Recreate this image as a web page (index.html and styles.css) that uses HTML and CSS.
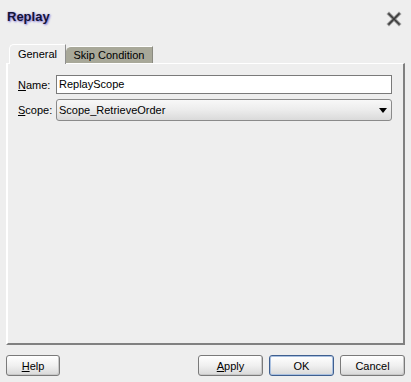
FILE: index.html
```html
<!DOCTYPE html>
<html>
<head>
<meta charset="utf-8">
<link rel="stylesheet" href="styles.css">
</head>
<body>
<div class="dialog">
  <div class="titlebar">
    <span class="title">Replay</span>
    <svg class="close" width="16" height="16" viewBox="0 0 16 16">
      <path d="M3 3 L13 13 M13 3 L3 13" stroke="#9a9a9a" stroke-width="3.6" stroke-linecap="square"/>
      <path d="M3 3 L13 13 M13 3 L3 13" stroke="#3a3a3a" stroke-width="1.6" stroke-linecap="square"/>
    </svg>
  </div>
  <div class="tabs">
    <div class="tab active">General</div>
    <div class="tab inactive">Skip Condition</div>
  </div>
  <div class="panel">
    <div class="row">
      <label class="lbl"><u>N</u>ame:</label>
      <div class="input">ReplayScope</div>
    </div>
    <div class="row">
      <label class="lbl"><u>S</u>cope:</label>
      <div class="select">
        <span>Scope_RetrieveOrder</span>
        <svg width="8" height="5" viewBox="0 0 8 5"><path d="M0 0 H8 L4 5 Z" fill="#000"/></svg>
      </div>
    </div>
  </div>
  <div class="footer">
    <button class="btn"><u>H</u>elp</button>
    <div class="spacer"></div>
    <button class="btn wide"><u>A</u>pply</button>
    <button class="btn wide default">OK</button>
    <button class="btn wide">Cancel</button>
  </div>
</div>
</body>
</html>
```
FILE: styles.css
```css
html, body {
  margin: 0;
  padding: 0;
  background: #eeeeee;
}
.dialog {
  width: 411px;
  height: 382px;
  display: flex;
  flex-direction: column;
  font-family: "Liberation Sans", Arial, sans-serif;
  font-size: 11px;
  color: #000;
}
.titlebar {
  height: 44px;
  display: flex;
  justify-content: space-between;
  align-items: flex-start;
  padding: 9px 9px 0 7px;
  box-sizing: border-box;
}
.title {
  font-weight: bold;
  font-size: 13px;
  color: #141438;
  text-shadow: 1px 1px 2px #8c82d8, 0 0 2px #b4aaf0;
}
.close {
  margin-top: 2px;
}
.tabs {
  display: flex;
  align-items: flex-end;
  height: 19px;
  padding-left: 9px;
}
.tab {
  box-sizing: border-box;
  display: flex;
  align-items: center;
  justify-content: center;
}
.tab.active {
  width: 57px;
  height: 20px;
  margin-bottom: -1px;
  background: #eeeeee;
  border-left: 1px solid #ffffff;
  border-top: 1px solid #ffffff;
  border-right: 1px solid #8f8f8f;
  border-top-left-radius: 5px;
  padding-bottom: 2px;
  position: relative;
  z-index: 1;
}
.tab.inactive {
  width: 87px;
  height: 17px;
  background: #a8a899;
  border-top: 1px solid #ffffff;
  border-right: 1px solid #8a8a80;
  border-top-left-radius: 5px;
  padding-bottom: 1px;
}
.panel {
  flex: 1;
  margin: 0 6px;
  border-top: 1px solid #ffffff;
  border-left: 2px solid #ffffff;
  border-right: 2px solid #808080;
  border-bottom: 2px solid #808080;
  padding: 11px 11px 0 10px;
  display: flex;
  flex-direction: column;
  gap: 5px;
}
.row {
  display: flex;
  align-items: center;
}
.lbl {
  width: 38px;
}
.input {
  flex: 1;
  height: 19px;
  box-sizing: border-box;
  border: 1px solid #7a7a7a;
  background: #ffffff;
  padding: 0 2px;
  line-height: 17px;
}
.select {
  flex: 1;
  height: 22px;
  box-sizing: border-box;
  border: 1px solid #8a8a8a;
  border-radius: 3px;
  background: linear-gradient(#f8f8f8, #ececec 50%, #dadada);
  padding: 0 4px 0 2px;
  display: flex;
  align-items: center;
  justify-content: space-between;
}
.footer {
  height: 37px;
  display: flex;
  align-items: flex-start;
  padding: 10px 6px 0 6px;
  box-sizing: border-box;
  gap: 6px;
}
.spacer {
  flex: 1;
}
.btn {
  font-family: "Liberation Sans", Arial, sans-serif;
  font-size: 11px;
  color: #000;
  width: 54px;
  height: 21px;
  border: 1px solid #7a7a7a;
  border-radius: 3px;
  background: linear-gradient(#ffffff, #f0f0f0 50%, #d8d8d8);
  padding: 0;
  box-shadow: inset -1px -1px 0 #c8c8c8;
}
.btn.wide {
  width: 65px;
}
.btn.default {
  border-color: #3f5f8f;
  box-shadow: inset 0 0 0 1px #a9c0e0;
}
```
